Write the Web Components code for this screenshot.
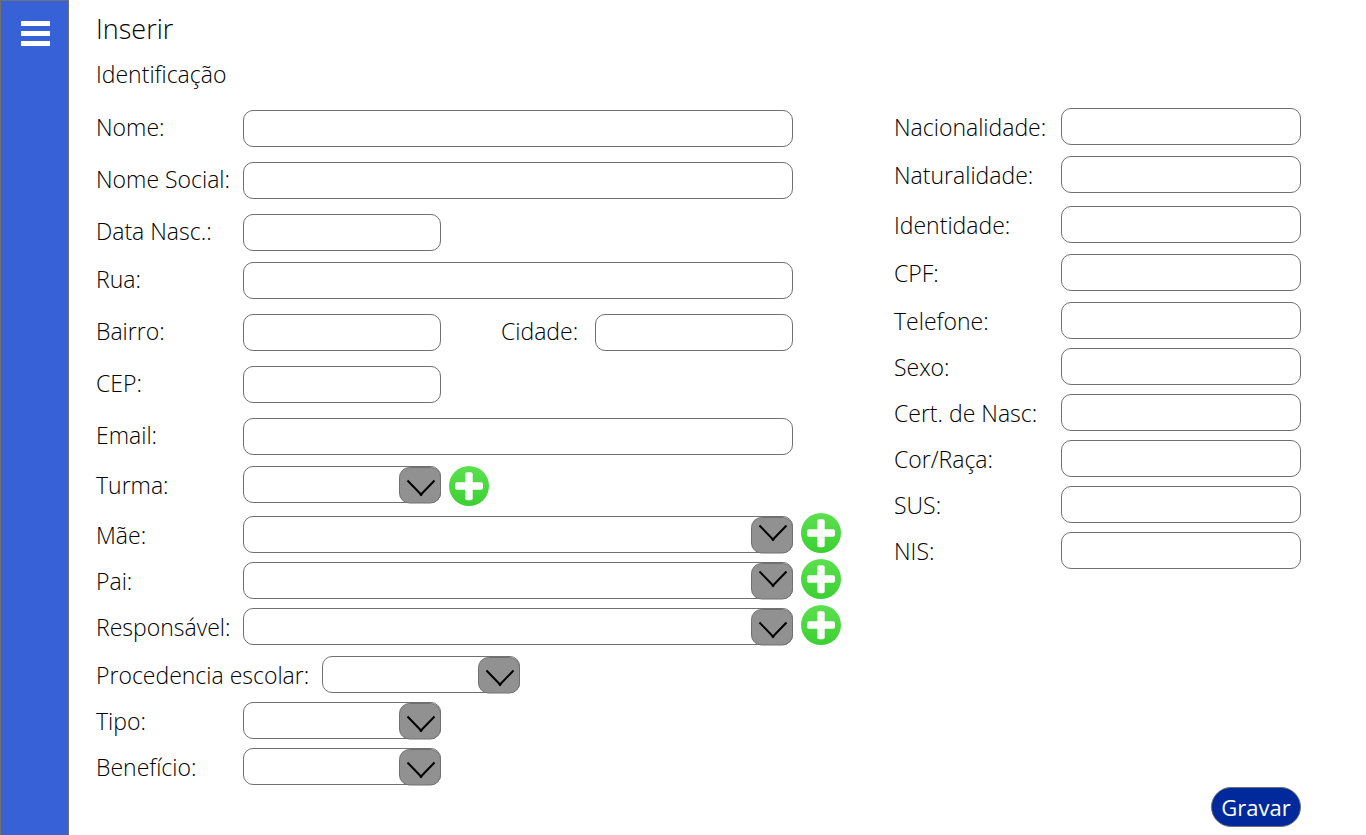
<!DOCTYPE html>
<html lang="pt-BR">
<head>
<meta charset="utf-8">
<meta name="viewport" content="width=device-width, initial-scale=1">
<title>Inserir</title>
<style>
  body { margin: 0; background: #fff; color: #000; font-family: "Open Sans", "Noto Sans", sans-serif; font-size: 23px; font-weight: 300; line-height: 32px; }
</style>
</head>
<body>
<student-page></student-page>

<template id="t-page">
  <style>
    :host { display: flex; min-height: 100vh; }
    main { flex: 1; min-width: 0; box-sizing: border-box; padding: 11px 65px 8px 27px; }
    h1, h2 { margin: 0; font-weight: inherit; }
    h1 { font-size: 27px; line-height: 36px; }
    h2 { font-size: 23px; line-height: 32px; margin-top: 11px; }
    form { margin: 18px 0 0; }
    .columns { display: grid; grid-template-columns: minmax(0, 1fr) 407px; column-gap: 53px; align-items: start; }
    .address { padding-top: 2px; --label: 147px; }
    .documents { --label: 167px; --text-line: 38px; }
    .actions { display: flex; justify-content: flex-end; margin-top: 2px; }
  </style>
  <side-bar></side-bar>
  <main>
    <h1>Inserir</h1>
    <h2>Identificação</h2>
    <form>
      <div class="columns">
        <div class="address">
          <form-row gap="xl"><text-field name="nome">Nome:</text-field></form-row>
          <form-row gap="xl"><text-field name="social">Nome Social:</text-field></form-row>
          <form-row gap="m"><text-field name="nascimento" short>Data Nasc.:</text-field></form-row>
          <form-row gap="xl"><text-field name="rua">Rua:</text-field></form-row>
          <form-row gap="xl"><text-field name="bairro" short>Bairro:</text-field><text-field name="cidade" short compact>Cidade:</text-field></form-row>
          <form-row gap="xl"><text-field name="cep" short>CEP:</text-field></form-row>
          <form-row gap="m"><text-field name="email">Email:</text-field></form-row>
          <form-row gap="l"><select-field name="turma" short>Turma:</select-field><add-button slot="action" label="Adicionar turma"></add-button></form-row>
          <form-row gap="s" raised><select-field name="mae" high>Mãe:</select-field><add-button slot="action" label="Adicionar mãe"></add-button></form-row>
          <form-row gap="s" raised><select-field name="pai" high>Pai:</select-field><add-button slot="action" label="Adicionar pai"></add-button></form-row>
          <form-row gap="m" raised><select-field name="responsavel">Responsável:</select-field><add-button slot="action" label="Adicionar responsável"></add-button></form-row>
          <form-row gap="s"><select-field name="procedencia" short wide>Procedencia escolar:</select-field></form-row>
          <form-row gap="s"><select-field name="tipo" short>Tipo:</select-field></form-row>
          <form-row><select-field name="beneficio" short>Benefício:</select-field></form-row>
        </div>
        <div class="documents">
          <form-row gap="m" full><text-field name="nacionalidade">Nacionalidade:</text-field></form-row>
          <form-row gap="l" full><text-field name="naturalidade">Naturalidade:</text-field></form-row>
          <form-row gap="m" full><text-field name="identidade">Identidade:</text-field></form-row>
          <form-row gap="m" full><text-field name="cpf">CPF:</text-field></form-row>
          <form-row gap="s" full><text-field name="telefone">Telefone:</text-field></form-row>
          <form-row gap="s" full><text-field name="sexo">Sexo:</text-field></form-row>
          <form-row gap="s" full><text-field name="certidao">Cert. de Nasc:</text-field></form-row>
          <form-row gap="s" full><text-field name="cor">Cor/Raça:</text-field></form-row>
          <form-row gap="s" full><text-field name="sus">SUS:</text-field></form-row>
          <form-row full><text-field name="nis">NIS:</text-field></form-row>
        </div>
      </div>
      <div class="actions"><save-button>Gravar</save-button></div>
    </form>
  </main>
</template>

<template id="t-sidebar">
  <style>
    :host { display: block; box-sizing: border-box; flex: none; width: 69px; background: #3761d7; border: 1px solid #6f6f6f; border-bottom: 0; }
    button { display: block; margin: 20px 0 0 20px; padding: 0; border: 0; background: none; cursor: pointer; }
    svg { display: block; }
  </style>
  <nav>
    <button type="button" aria-label="Menu">
      <svg width="29" height="25" viewBox="0 0 29 25" fill="#fff"><path d="M0 0h29v5H0zM0 10h29v5H0zM0 20h29v5H0z"/></svg>
    </button>
  </nav>
</template>

<template id="t-row">
  <style>
    :host { display: flex; height: 37px; align-items: flex-start; }
    :host([gap="s"]) { margin-bottom: 9px; }
    :host([gap="m"]) { margin-bottom: 11px; }
    :host([gap="l"]) { margin-bottom: 13px; }
    :host([gap="xl"]) { margin-bottom: 15px; }
    :host([raised]) { align-items: flex-end; }
    .fields { flex: 1; min-width: 0; display: flex; justify-content: space-between; padding-right: 48px; }
    :host([full]) .fields { padding-right: 0; }
    .fields.with-action { padding-right: 8px; }
    .fields.hug { flex: none; }
  </style>
  <div class="fields"><slot></slot></div>
  <slot name="action"></slot>
</template>

<template id="t-text">
  <style>
    :host { display: flex; flex: 1; min-width: 0; }
    :host([short]) { flex: none; }
    label { flex: none; width: var(--label); height: 37px; line-height: var(--text-line, 34px); white-space: nowrap; }
    :host([compact]) label { width: 94px; }
    input { box-sizing: border-box; flex: 1; min-width: 0; width: 100%; height: 37px; margin: 0; padding: 0 12px; border: 1px solid #707070; border-radius: 10px; background: #fff; font: inherit; color: inherit; }
    :host([short]) input { flex: none; width: 198px; }
  </style>
  <label for="control"><slot></slot></label>
  <input id="control" type="text">
</template>

<template id="t-select">
  <style>
    :host { display: flex; flex: 1; min-width: 0; }
    :host([short]) { flex: none; }
    label { flex: none; width: var(--label); line-height: 38px; height: 37px; white-space: nowrap; }
    :host([wide]) label { width: 226px; }
    .box { position: relative; flex: 1; min-width: 0; height: 37px; }
    :host([short]) .box { flex: none; width: 198px; }
    select { appearance: none; box-sizing: border-box; display: block; width: 100%; height: 37px; margin: 0; padding: 0 50px 0 12px; border: 1px solid #707070; border-radius: 10px; background: #fff; font: inherit; color: inherit; }
    svg { position: absolute; right: 0; top: 1px; pointer-events: none; }
    .low, :host([high]) .raised { display: inline; }
    .raised, :host([high]) .low { display: none; }
  </style>
  <label for="control"><slot></slot></label>
  <div class="box">
    <select id="control"><option value=""></option></select>
    <svg width="42" height="37" viewBox="0 0 42 37" fill="none" aria-hidden="true">
      <rect x=".5" y=".5" width="41" height="35.5" rx="10" fill="#919191" stroke="#707070"/>
      <g stroke="#000" stroke-width="2">
        <path class="low" d="M8.500 13.500L23 28.500M35.500 13.500L21 28.500"/>
        <path class="raised" d="M8.500 8.500L23 23.500M35.500 8.500L21 23.500"/>
      </g>
    </svg>
  </div>
</template>

<template id="t-add">
  <style>
    :host { display: block; flex: none; }
    button { display: block; width: 40px; height: 40px; margin: 0; padding: 0; border: 0; border-radius: 50%; background: linear-gradient(#5ce04f, #3bd033); cursor: pointer; }
    svg { display: block; }
  </style>
  <button type="button"><svg width="40" height="40" viewBox="0 0 40 40" fill="#fff" aria-hidden="true"><rect x="6" y="16.200" width="28" height="7.500" rx="2"/><rect x="16.200" y="6.200" width="7.500" height="28" rx="2"/></svg></button>
</template>

<template id="t-save">
  <style>
    :host { display: block; }
    button { box-sizing: border-box; width: 90px; height: 40px; margin: 0; padding: 0; border: 1px solid #707070; border-radius: 20px; background: #002a9c; color: #fff; font: inherit; font-size: 22px; font-weight: 400; line-height: 38px; cursor: pointer; }
  </style>
  <button type="submit"><slot></slot></button>
</template>

<script>
  class Base extends HTMLElement {
    constructor() {
      super();
      const tpl = document.getElementById(this.constructor.template);
      this.attachShadow({ mode: "open" }).append(tpl.content.cloneNode(true));
    }
  }
  class SideBar extends Base { static template = "t-sidebar"; }
  class FormRow extends Base {
    static template = "t-row";
    connectedCallback() {
      const fields = this.shadowRoot.querySelector(".fields");
      const action = this.querySelector('[slot="action"]');
      fields.classList.toggle("with-action", !!action);
      fields.classList.toggle("hug", !!action && !!this.querySelector("[short]"));
    }
  }
  class Field extends Base {
    connectedCallback() {
      this.shadowRoot.getElementById("control").name = this.getAttribute("name") || "";
    }
  }
  class TextField extends Field { static template = "t-text"; }
  class SelectField extends Field { static template = "t-select"; }
  class AddButton extends Base {
    static template = "t-add";
    connectedCallback() {
      this.shadowRoot.querySelector("button").setAttribute("aria-label", this.getAttribute("label") || "");
    }
  }
  class SaveButton extends Base { static template = "t-save"; }
  class StudentPage extends Base { static template = "t-page"; }

  customElements.define("side-bar", SideBar);
  customElements.define("form-row", FormRow);
  customElements.define("text-field", TextField);
  customElements.define("select-field", SelectField);
  customElements.define("add-button", AddButton);
  customElements.define("save-button", SaveButton);
  customElements.define("student-page", StudentPage);
</script>
</body>
</html>
